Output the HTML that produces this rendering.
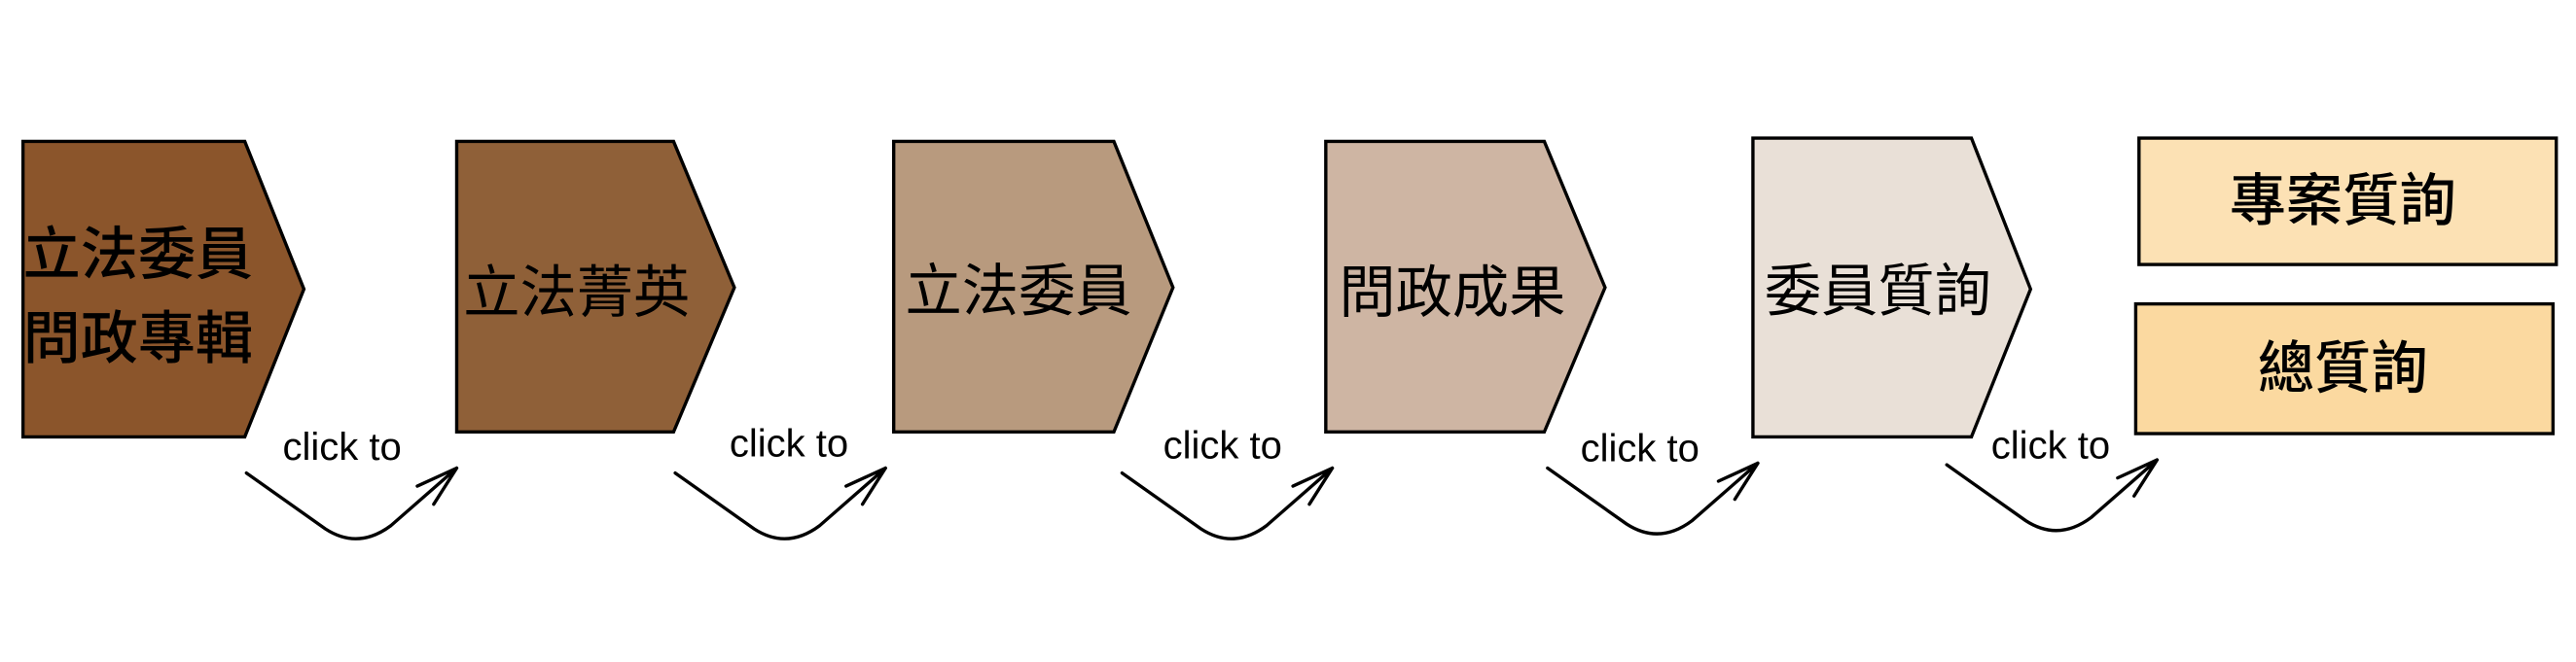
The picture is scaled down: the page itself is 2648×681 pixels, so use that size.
<!DOCTYPE html>
<html><head><meta charset="utf-8"><style>
html,body{margin:0;padding:0;background:#fff;width:2648px;height:681px;overflow:hidden}
svg{display:block}
.cj{font-family:"Liberation Sans","Noto Sans CJK TC",sans-serif;fill:#000}
.ck{font-family:"Liberation Sans",sans-serif;font-size:23.7px;fill:#000}
</style></head><body>
<svg width="2648" height="681" viewBox="0 0 1568 403" xmlns="http://www.w3.org/2000/svg">
<g stroke="#000" stroke-width="2" stroke-linejoin="miter">
<polygon points="14,86 149,86 185,176 149,266 14,266" fill="#8b552b"/>
<polygon points="278,86 410,86 447,175 410,263 278,263" fill="#8f6038"/>
<polygon points="544,86 678,86 714,175 678,263 544,263" fill="#b89a7e"/>
<polygon points="807,86 940,86 977,175 940,263 807,263" fill="#ceb5a3"/>
<polygon points="1067,84 1200,84 1236,176 1200,266 1067,266" fill="#e9e0d7"/>
<rect x="1302" y="84" width="254" height="77" fill="#fce1b4"/>
<rect x="1300" y="185" width="254" height="79" fill="#fbd9a0"/>
</g>
<g class="cj" font-size="34.5" text-anchor="middle">
<text x="84" y="167" font-size="35" font-weight="500">立法委員</text>
<text x="84" y="218" font-size="35" font-weight="500">問政專輯</text>
<text x="351" y="190">立法菁英</text>
<text x="620" y="189">立法委員</text>
<text x="884" y="190">問政成果</text>
<text x="1143" y="189">委員質詢</text>
<text x="1426" y="134" font-weight="500">專案質詢</text>
<text x="1426" y="236" font-weight="500">總質詢</text>
</g>
<g class="ck">
<text x="172" y="280">click to</text>
<text x="444" y="278">click to</text>
<text x="708" y="279">click to</text>
<text x="962" y="281">click to</text>
<text x="1212" y="279">click to</text>
</g>
<g fill="none" stroke="#000" stroke-width="2" stroke-linecap="round">
<g id="a"><path d="M150 288 L198 322 Q218 335 238 320 L278 285 M278 285 L254 296 M278 285 L264 307"/></g>
<use href="#a" transform="translate(261,0)"/>
<use href="#a" transform="translate(533,0)"/>
<use href="#a" transform="translate(792,-3)"/>
<use href="#a" transform="translate(1035,-5)"/>
</g>
</svg>
</body></html>
